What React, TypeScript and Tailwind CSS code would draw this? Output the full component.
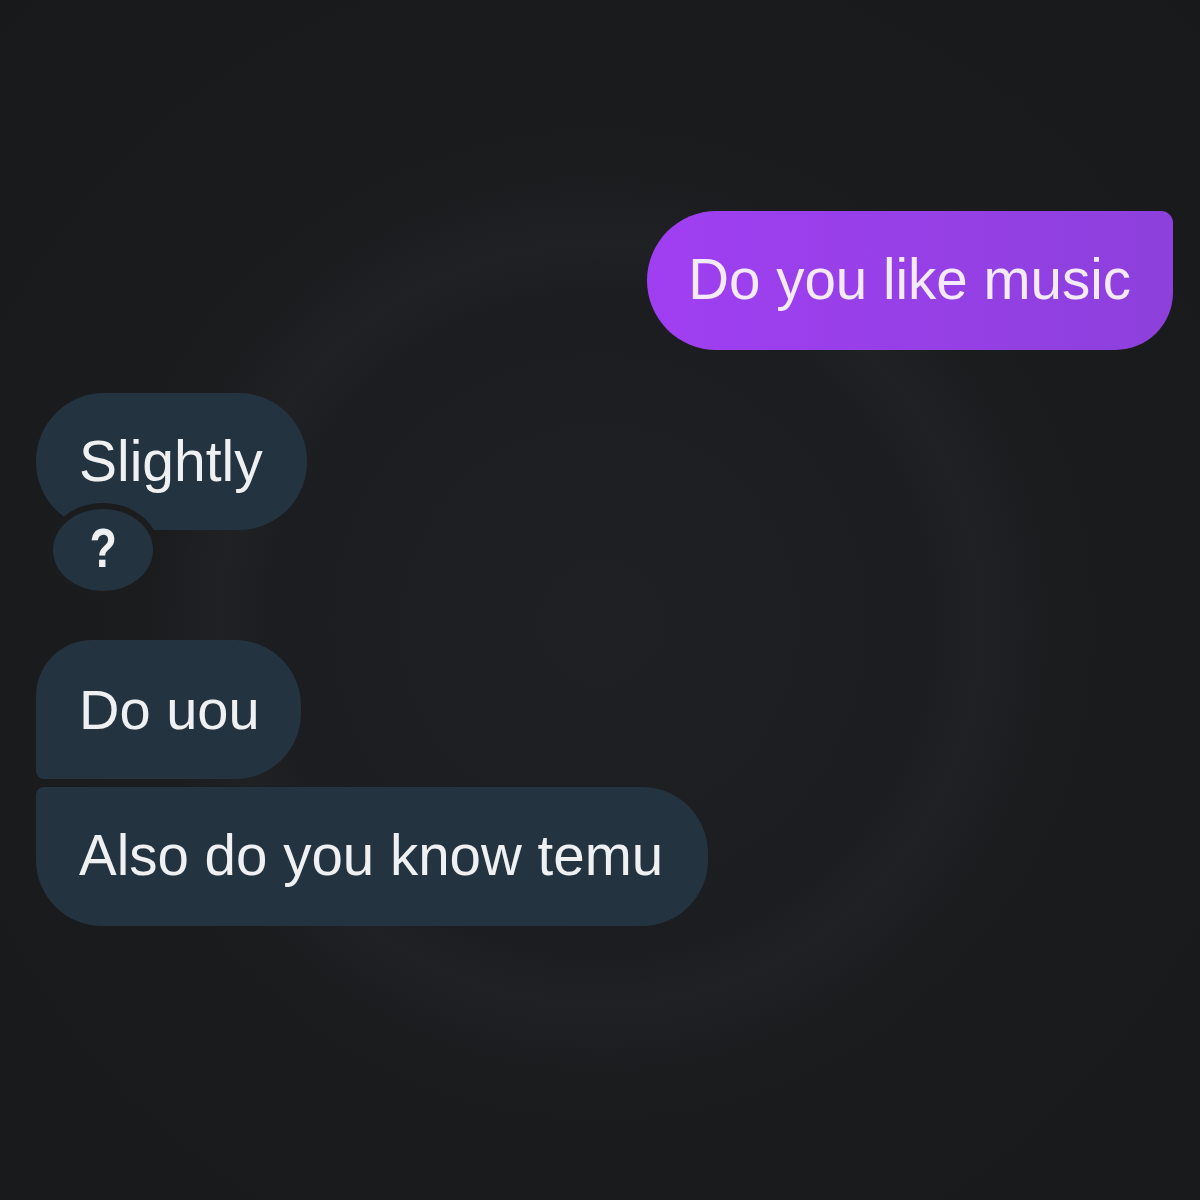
const font = { fontFamily: '"Liberation Sans", Arial, sans-serif' };

export default function App() {
  return (
    <div
      className="w-[1200px] h-[1200px] overflow-hidden bg-[#1b1c1e] bg-[radial-gradient(circle_at_50%_52%,#1f2023_0%,#1c1d20_38%,#202124_44%,#1b1c1e_52%,#18191b_100%)] text-[#eef0f2]"
      style={font}
    >
      <div className="flex flex-col pt-[211px] pl-[36px] pr-[27px]">
        {/* outgoing */}
        <div className="flex justify-end">
          <div className="h-[139px] flex items-center pl-[41px] pr-[42px] rounded-tl-[70px] rounded-bl-[70px] rounded-tr-[12px] rounded-br-[58px] bg-gradient-to-r from-[#a03ff2] to-[#8d40dc] text-[#f3eafb] text-[56.5px] leading-none">
            Do you like music
          </div>
        </div>

        {/* incoming */}
        <div className="mt-[43px] flex flex-col items-start">
          <div className="h-[137px] flex items-center pl-[43px] pr-[44px] rounded-[68px] bg-[#243340] text-[57px] leading-none">
            Slightly
          </div>
          <div className="-mt-[27px] ml-[11px] w-[112px] h-[94px] rounded-[50%] border-[6px] border-[#1b1c1e] bg-[#243340] flex items-center justify-center">
            <span className="text-[56px] font-bold leading-none scale-x-[0.8] -mt-[4px] text-[#eef0f2]">?</span>
          </div>
        </div>

        <div className="mt-[43px] flex flex-col items-start gap-[8px]">
          <div className="h-[139px] flex items-center pl-[43px] pr-[41px] rounded-tl-[56px] rounded-bl-[8px] rounded-tr-[66px] rounded-br-[66px] bg-[#243340] text-[56px] leading-none">
            Do uou
          </div>
          <div className="h-[139px] flex items-center pl-[43px] pr-[45px] rounded-tl-[8px] rounded-bl-[66px] rounded-tr-[66px] rounded-br-[66px] bg-[#243340] text-[56.5px] leading-none">
            Also do you know temu
          </div>
        </div>
      </div>
    </div>
  );
}
